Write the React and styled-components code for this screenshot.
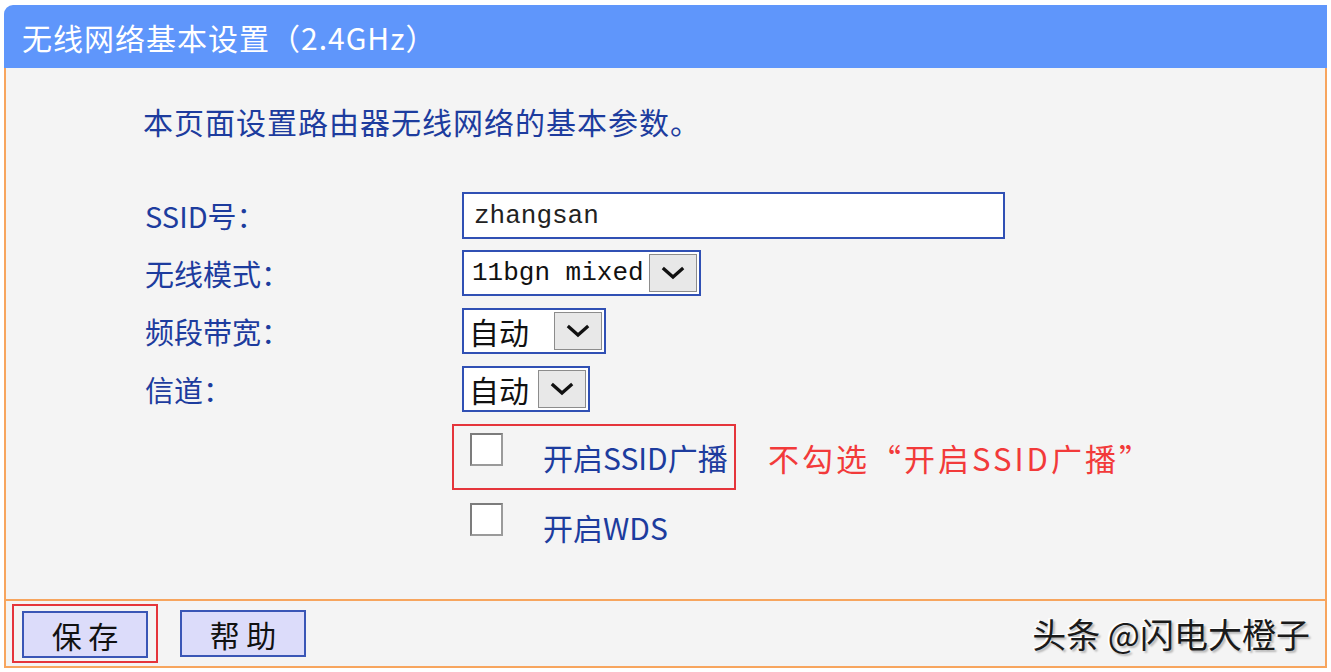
import React from "react";
import styled, { createGlobalStyle } from "styled-components";

const GlobalStyle = createGlobalStyle`
  html, body {
    margin: 0;
    padding: 0;
    background: #ffffff;
  }
  body {
    font-family: "Noto Sans CJK SC", "Noto Sans", sans-serif;
  }
`;

const CJK = `"Noto Sans CJK SC", "Noto Sans", sans-serif`;
const MONO = `"Liberation Mono", "Noto Sans CJK SC", monospace`;

const Frame = styled.div`
  margin: 5px 0 0 4px;
  width: 1323px;
`;

const Header = styled.div`
  height: 63px;
  background: #5f96fb;
  border-top-left-radius: 9px;
  display: flex;
  align-items: center;
  padding-left: 18px;
  color: #ffffff;
  font-family: ${CJK};
  font-size: 30px;
  letter-spacing: 1px;
`;

const Body = styled.div`
  box-sizing: border-box;
  height: 531px;
  background: #f4f4f4;
  border-left: 2px solid #f7a55e;
  border-right: 2px solid #f7a55e;
  padding: 33px 0 0 137px;
  display: flex;
  flex-direction: column;
`;

const Intro = styled.div`
  font-family: ${CJK};
  font-size: 30px;
  line-height: 40px;
  letter-spacing: 1px;
  color: #1d3c9e;
`;

const Form = styled.div`
  margin-top: 45px;
  display: flex;
  flex-direction: column;
`;

const Row = styled.div`
  height: 58px;
  display: flex;
  align-items: center;
`;

const Label = styled.div`
  width: 319px;
  padding-left: 2px;
  box-sizing: border-box;
  font-family: ${CJK};
  font-size: 29px;
  color: #1d3c9e;
`;

const TextInput = styled.div`
  box-sizing: border-box;
  width: 543px;
  height: 47px;
  border: 2px solid #3050b4;
  background: #ffffff;
  display: flex;
  align-items: center;
  padding: 2px 0 0 10px;
  font-family: ${MONO};
  font-size: 26px;
  color: #222;
`;

const Select = styled.div`
  box-sizing: border-box;
  width: ${(p) => p.$w}px;
  height: 46px;
  border: 2px solid #3050b4;
  background: #ffffff;
  display: flex;
  align-items: stretch;
`;

const SelectValue = styled.div`
  flex: 1;
  display: flex;
  align-items: center;
  padding-left: ${(p) => (p.$mono ? 8 : 5)}px;
  font-family: ${(p) => (p.$mono ? MONO : CJK)};
  font-size: ${(p) => (p.$mono ? 26 : 30)}px;
  color: #111;
`;

const SelectButton = styled.div`
  box-sizing: border-box;
  width: 48px;
  margin: 2px 2px 2px 0;
  background: #e8e8e8;
  border: 1px solid #8c8c8c;
  display: flex;
  align-items: center;
  justify-content: center;
`;

const CheckRow = styled.div`
  box-sizing: border-box;
  margin-left: ${(p) => p.$ml}px;
  margin-top: ${(p) => p.$mt}px;
  display: flex;
  align-items: center;
  gap: 32px;
`;

const CheckFrame = styled.div`
  box-sizing: border-box;
  width: 284px;
  height: 66px;
  border: 2px solid ${(p) => (p.$hl ? "#e5353b" : "transparent")};
  display: flex;
  align-items: center;
  padding-left: 16px;
`;

const CheckBox = styled.div`
  box-sizing: border-box;
  width: 33px;
  height: 33px;
  background: #ffffff;
  border: 2px solid #7c7c7c;
  border-right-color: #9a9a9a;
  border-bottom-color: #9a9a9a;
  margin-top: -16px;
  flex-shrink: 0;
`;

const CheckLabel = styled.div`
  margin-left: 40px;
  font-family: ${CJK};
  font-size: 30px;
  color: #1d3c9e;
  white-space: nowrap;
`;

const Note = styled.div`
  font-family: ${CJK};
  font-size: 31px;
  letter-spacing: 3px;
  color: #f23a3a;
  white-space: nowrap;
`;

const Footer = styled.div`
  box-sizing: border-box;
  height: 69px;
  background: #f4f4f4;
  border: 2px solid #f7a55e;
  display: flex;
  align-items: center;
  padding: 0 15px 0 6px;
`;

const SaveMark = styled.div`
  box-sizing: border-box;
  width: 146px;
  height: 59px;
  border: 2px solid #e5353b;
  display: flex;
  align-items: center;
  padding: 2px 0 0 8px;
`;

const Button = styled.div`
  box-sizing: border-box;
  width: 126px;
  height: 47px;
  background: #dcdcfa;
  border: 2px solid #3a56b6;
  display: flex;
  align-items: center;
  justify-content: center;
  font-family: ${CJK};
  font-size: 30px;
  color: #111;
  margin-left: ${(p) => p.$ml || 0}px;
`;

const Watermark = styled.div`
  margin-left: auto;
  font-family: ${CJK};
  font-size: 34px;
  color: #1a1a1a;
  text-shadow: -2px -1px 0 #ffffff, 2px 2px 2px rgba(0, 0, 0, 0.25);
`;

function Chevron() {
  return (
    <svg width="24" height="16" viewBox="0 0 24 16">
      <path d="M3 4 L12 12 L21 4" fill="none" stroke="#111" strokeWidth="3.2" strokeLinecap="square" />
    </svg>
  );
}

function Dropdown({ width, value, mono }) {
  return (
    <Select $w={width}>
      <SelectValue $mono={mono}>{value}</SelectValue>
      <SelectButton>
        <Chevron />
      </SelectButton>
    </Select>
  );
}

export default function App() {
  return (
    <>
      <GlobalStyle />
      <Frame>
        <Header>无线网络基本设置（2.4GHz）</Header>
        <Body>
          <Intro>本页面设置路由器无线网络的基本参数。</Intro>
          <Form>
            <Row>
              <Label>SSID号：</Label>
              <TextInput>zhangsan</TextInput>
            </Row>
            <Row>
              <Label>无线模式：</Label>
              <Dropdown width={239} value="11bgn mixed" mono />
            </Row>
            <Row>
              <Label>频段带宽：</Label>
              <Dropdown width={144} value="自动" />
            </Row>
            <Row>
              <Label>信道：</Label>
              <Dropdown width={128} value="自动" />
            </Row>
          </Form>
          <CheckRow $ml={309} $mt={6}>
            <CheckFrame $hl>
              <CheckBox />
              <CheckLabel>开启SSID广播</CheckLabel>
            </CheckFrame>
            <Note>不勾选“开启SSID广播”</Note>
          </CheckRow>
          <CheckRow $ml={309} $mt={4}>
            <CheckFrame>
              <CheckBox />
              <CheckLabel>开启WDS</CheckLabel>
            </CheckFrame>
          </CheckRow>
        </Body>
        <Footer>
          <SaveMark>
            <Button>保 存</Button>
          </SaveMark>
          <Button $ml={22}>帮 助</Button>
          <Watermark>头条 @闪电大橙子</Watermark>
        </Footer>
      </Frame>
    </>
  );
}
